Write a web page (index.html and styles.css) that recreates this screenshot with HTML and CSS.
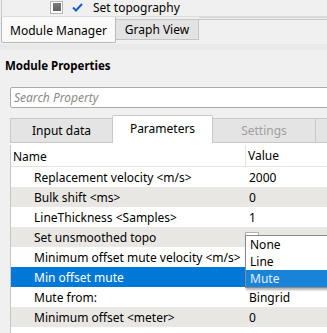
FILE: index.html
```html
<!DOCTYPE html>
<html>
<head>
<meta charset="utf-8">
<link rel="stylesheet" href="styles.css">
</head>
<body>
<div class="app">
  <div class="tree">
    <div class="tree-row">
      <span class="cb"><span class="cb-in"></span></span>
      <svg class="check" width="11" height="9" viewBox="0 0 11 9"><path d="M1 4.5 L4 7.5 L10 1" fill="none" stroke="#1a5fc4" stroke-width="2"/></svg>
      <span class="tree-text">Set topography</span>
    </div>
  </div>
  <div class="south-tabs">
    <div class="stab active">Module Manager</div>
    <div class="stab">Graph View</div>
    <div class="stab-fill"></div>
  </div>
  <div class="splitter"></div>
  <div class="props">
    <div class="props-title">Module Properties</div>
    <div class="search">Search Property</div>
    <div class="ptabs">
      <div class="ptab">Input data</div>
      <div class="ptab active">Parameters</div>
      <div class="ptab disabled">Settings</div>
      <div class="ptab"></div>
    </div>
    <div class="pane">
      <div class="table">
        <div class="hdr"><div class="c-name">Name</div><div class="c-val">Value</div></div>
        <div class="row"><div class="c-name ind">Replacement velocity &lt;m/s&gt;</div><div class="c-val">2000</div></div>
        <div class="row alt"><div class="c-name ind">Bulk shift &lt;ms&gt;</div><div class="c-val">0</div></div>
        <div class="row"><div class="c-name ind">LineThickness &lt;Samples&gt;</div><div class="c-val">1</div></div>
        <div class="row alt"><div class="c-name ind">Set unsmoothed topo</div><div class="c-val"></div></div>
        <div class="row"><div class="c-name ind">Minimum offset mute velocity &lt;m/s&gt;</div><div class="c-val"></div></div>
        <div class="row sel"><div class="c-name ind">Min offset mute</div><div class="c-val"></div></div>
        <div class="row"><div class="c-name ind">Mute from:</div><div class="c-val">Bingrid</div></div>
        <div class="row alt"><div class="c-name ind">Minimum offset &lt;meter&gt;</div><div class="c-val">0</div></div>
        <div class="row"><div class="c-name"></div><div class="c-val"></div></div>
      </div>
      <div class="combo-stub"></div>
      <div class="popup">
        <div class="item">None</div>
        <div class="item">Line</div>
        <div class="item hl">Mute</div>
      </div>
    </div>
  </div>
</div>
</body>
</html>
```

FILE: styles.css
```css
html, body {
  margin: 0;
  padding: 0;
  background: #f0f0f0;
  overflow: hidden;
}
body {
  width: 327px;
  height: 333px;
  font-family: "Noto Sans", "Open Sans", sans-serif;
  font-size: 12px;
  color: #000;
}
.app {
  width: 327px;
  height: 333px;
  overflow: hidden;
}
.tree {
  height: 16px;
  margin-left: 1px;
  border-left: 1px solid #c8c8c8;
  border-bottom: 1px solid #dcdcdc;
}
.tree-row {
  display: flex;
  align-items: center;
  height: 14px;
  padding-left: 48px;
}
.cb {
  width: 11px;
  height: 11px;
  border: 1px solid #b4b4b4;
  background: #fff;
  display: flex;
  align-items: center;
  justify-content: center;
}
.cb-in {
  width: 8px;
  height: 8px;
  background: linear-gradient(#7a7a7a, #606060);
}
.check {
  margin-left: 9px;
}
.tree-text {
  margin-left: 10px;
  line-height: 14px;
  position: relative;
  top: 1px;
}
.south-tabs {
  display: flex;
  align-items: flex-start;
  height: 27px;
  padding-left: 1px;
}
.stab {
  box-sizing: border-box;
  flex-shrink: 0;
  width: 83px;
  height: 21px;
  margin-top: 2px;
  padding-top: 1px;
  display: flex;
  align-items: center;
  justify-content: center;
  background: #e3e3e3;
  border-right: 1px solid #c4c4c4;
  border-bottom: 1px solid #c4c4c4;
  border-top: 1px solid #c8c8c8;
  line-height: 14px;
}
.stab.active {
  height: 26px;
  margin-top: 0;
  width: 115px;
  background: #fafafa;
  border: 1px solid #b9b9b9;
  border-top: none;
  border-radius: 0 0 2px 2px;
  padding-top: 3px;
}
.stab-fill {
  flex: 1;
  height: 0;
  border-top: 1px solid #d6d6d6;
  box-shadow: 0 1px 0 #f0f0f0, 0 2px 0 #c4c4c4;
}
.splitter {
  height: 6px;
  background: #e9e9e9;
}
.props {
  position: relative;
}
.props-title {
  font-weight: bold;
  font-size: 11.5px;
  padding-left: 5px;
  height: 32px;
  line-height: 32px;
}
.search {
  box-sizing: border-box;
  margin-left: 10px;
  width: 330px;
  height: 21px;
  margin-top: 5px;
  border: 1px solid #ababab;
  border-radius: 2px;
  background: #fff;
  color: #8a8a8a;
  font-style: italic;
  padding-left: 3px;
  line-height: 19px;
}
.ptabs {
  display: flex;
  align-items: flex-end;
  margin-left: 10px;
  margin-top: 7px;
  height: 27px;
}
.ptab {
  box-sizing: border-box;
  flex-shrink: 0;
  width: 102px;
  height: 24px;
  padding-top: 1px;
  background: #e4e4e4;
  border: 1px solid #c9c9c9;
  border-bottom: none;
  border-right: none;
  display: flex;
  align-items: center;
  justify-content: center;
  line-height: 14px;
}
.ptab.active {
  width: 101px;
  height: 28px;
  margin-bottom: -1px;
  background: #fff;
  border: 1px solid #c9c9c9;
  border-bottom: none;
  border-radius: 2px 2px 0 0;
  padding-top: 0;
  padding-bottom: 2px;
  position: relative;
  z-index: 1;
}
.ptab.active + .ptab { border-left: none; }
.ptab.disabled {
  color: #a0a0a0;
}
.pane {
  position: relative;
  margin-left: 10px;
  background: #fff;
  border-top: 1px solid #c9c9c9;
  height: 200px;
  padding-top: 2px;
}
.table {
  border-left: 1px solid #c5c5c5;
  width: 330px;
}
.hdr {
  display: flex;
  height: 21px;
  align-items: center;
  border-bottom: 1px solid #e3e3e3;
  background: #fff;
}
.hdr .c-name {
  padding-left: 2px;
  padding-top: 1px;
}
.hdr .c-val {
  border-left: 1px solid #e3e3e3;
  padding-left: 2px;
  height: 21px;
  line-height: 22px;
}
.row {
  display: flex;
  height: 20px;
  align-items: center;
  background: #fff;
  padding-top: 1px;
  box-sizing: border-box;
}
.row.alt {
  background: #e9e7e4;
}
.row.sel {
  background: #0078d7;
  color: #fff;
}
.c-name {
  box-sizing: border-box;
  width: 234px;
  white-space: nowrap;
}
.c-name.ind {
  padding-left: 23px;
}
.c-val {
  flex: 1;
  padding-left: 4px;
  white-space: nowrap;
}
.combo-stub {
  position: absolute;
  left: 235px;
  top: 89px;
  width: 12px;
  height: 6px;
  border: 1px solid #b0b0b0;
  border-bottom: none;
  background: #fff;
}
.popup {
  position: absolute;
  left: 235px;
  top: 92px;
  width: 100px;
  background: #fff;
  border: 1px solid #8a8a8a;
  box-shadow: 1px 2px 2px rgba(0,0,0,0.3);
}
.item {
  height: 17px;
  line-height: 18px;
  padding-left: 4px;
}
.item.hl {
  background: #1883d7;
  color: #e8f0ff;
}
```
